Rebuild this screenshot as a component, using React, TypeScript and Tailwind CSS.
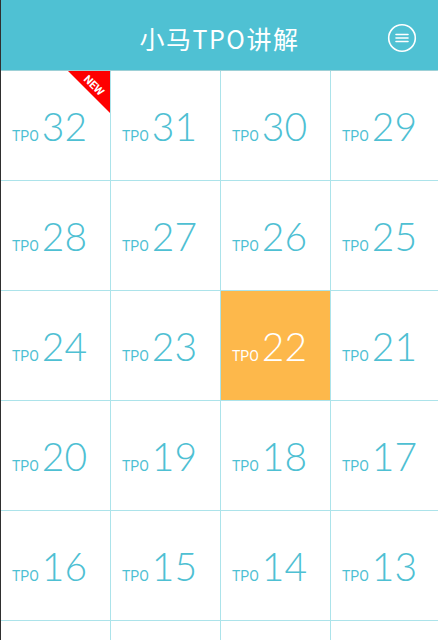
import React from "react";

const LINE = "#ace3ea";

function MenuIcon() {
  return (
    <svg width="30" height="30" viewBox="0 0 30 30" fill="none">
      <circle cx="15" cy="15" r="13.3" stroke="white" strokeWidth="1.6" />
      <path d="M9 11.5h12M9 15h12M9 18.5h12" stroke="white" strokeWidth="1.6" strokeLinecap="round" />
    </svg>
  );
}

function Cell({ n, active, isNew }: { n?: number; active?: boolean; isNew?: boolean }) {
  return (
    <div
      className={
        "relative flex items-center overflow-hidden pl-[11px] " +
        (active ? "bg-[#fdb84b] text-white" : "bg-white text-[#4ec0d3]")
      }
    >
      {n !== undefined ? (
        <div className="mt-[2px] flex items-baseline gap-[3px]">
          <span className="text-[14px] leading-none" style={{ fontFamily: "Roboto, 'Noto Sans', sans-serif" }}>
            TPO
          </span>
          <span
            className="text-[39px] font-light leading-none"
            style={{ fontFamily: "Lato, 'Noto Sans', sans-serif" }}
          >
            {n}
          </span>
        </div>
      ) : null}
      {isNew ? (
        <div className="absolute right-0 top-0 h-[42px] w-[42px] bg-[#fe0000] [clip-path:polygon(0_0,100%_0,100%_100%)]">
          <span
            className="absolute left-[14px] top-[9px] rotate-45 text-[11px] font-bold leading-none text-white"
            style={{ fontFamily: "Roboto, sans-serif" }}
          >
            NEW
          </span>
        </div>
      ) : null}
    </div>
  );
}

export default function App() {
  // 5 full rows are visible, the 6th is cut by the window edge
  const nums = Array.from({ length: 20 }, (_, i) => 32 - i);

  return (
    <main className="h-[640px] w-[438px] overflow-hidden border-l border-[#2f2f2f] bg-white">
      {/* Header */}
      <header className="relative flex h-[70px] items-center justify-center bg-[#4fc1d3] shadow-[0_1px_2px_rgba(0,0,0,0.12)]">
        <h1
          className="mt-[6px] text-[25px] leading-none tracking-[1.5px] text-white"
          style={{ fontFamily: "'Noto Sans CJK SC', 'Noto Sans', sans-serif" }}
        >
          小马TPO讲解
        </h1>
        <div className="absolute right-[21px] top-[23px]">
          <MenuIcon />
        </div>
      </header>

      {/* TPO grid */}
      <div
        className="grid grid-cols-[109px_109px_109px_1fr] gap-px pt-px"
        style={{ backgroundColor: LINE, gridAutoRows: "109px" }}
      >
        {nums.map((n) => (
          <Cell key={n} n={n} active={n === 22} isNew={n === 32} />
        ))}
        <Cell />
        <Cell />
        <Cell />
        <Cell />
      </div>
    </main>
  );
}
